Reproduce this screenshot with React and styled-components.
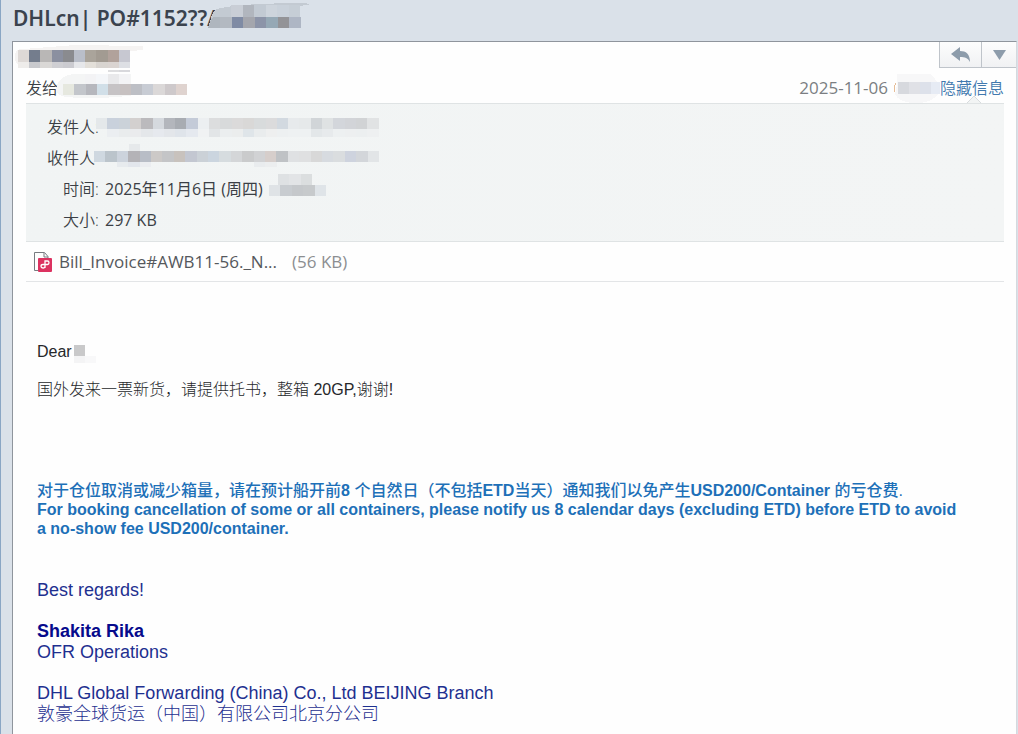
import React from "react";
import styled, { createGlobalStyle } from "styled-components";

const GlobalStyle = createGlobalStyle`
  * { box-sizing: border-box; }
  body {
    margin: 0;
    background: #dae1e9;
    color: #3b3f45;
    font-family: "Open Sans", "Noto Sans CJK SC", sans-serif;
    font-size: 16px;
  }
`;

const Page = styled.main`
  display: flex;
  flex-direction: column;
  min-height: 100vh;
  padding: 0 1px 0 11px;
  border-left: 1px solid #8aa6c4;
`;

const TitleBar = styled.header`
  display: flex;
  align-items: flex-start;
  height: 41px;
  padding-left: 1px;
`;

const Title = styled.h1`
  margin: 0;
  font-family: "Noto Sans", "Open Sans", sans-serif;
  font-size: 21px;
  line-height: 36px;
  font-weight: 600;
  color: #3b434e;
  white-space: nowrap;
`;

const Panel = styled.article`
  flex: 1;
  background: #fefefe;
  border: 1px solid #8f959d;
  border-right-color: #d5d9de;
  border-bottom: 0;
`;

const SenderRow = styled.div`
  display: flex;
  justify-content: space-between;
  height: 32px;
`;

const Actions = styled.div`
  display: flex;
  height: 26px;
  border: 1px solid #bfc4ca;
  border-width: 0 0 1px 1px;
`;

const ActionButton = styled.button`
  display: flex;
  align-items: center;
  justify-content: center;
  width: ${(p) => p.$width}px;
  padding: 0;
  border: 0;
  border-left: ${(p) => (p.$divided ? "1px solid #bfc4ca" : "0")};
  background: linear-gradient(#fdfdfd, #f0f1f3);
  color: #8d9cab;
`;

const RecipientRow = styled.div`
  display: flex;
  justify-content: space-between;
  height: 29px;
  padding: 0 12px 0 13px;
  line-height: 28px;
  font-weight: 350;
  white-space: nowrap;
`;

const Group = styled.div`
  display: flex;
`;

const DateText = styled.time`
  color: #7b7e82;
  font-size: 17px;
  font-weight: 400;
`;

const ToggleLink = styled.a`
  position: relative;
  color: #4179ae;
  text-decoration: none;
`;

const Notch = styled.svg`
  position: absolute;
  left: 27px;
  bottom: 0;
`;

const Details = styled.dl`
  margin: 0 12px 0 13px;
  padding: 8px 21px 5px;
  border-top: 1px solid #dfe3e4;
  border-bottom: 1px solid #dfe3e4;
  background: linear-gradient(100deg, #f1f4f4, #f3f5f5);
  font-weight: 350;
`;

const DetailRow = styled.div`
  display: flex;
  gap: ${(p) => (p.$indent ? 2 : 0)}px;
  height: 31px;
  padding-left: ${(p) => (p.$indent ? 16 : 0)}px;
  line-height: 30px;
  white-space: nowrap;
`;

const Term = styled.dt`
  white-space: pre;
`;

const Value = styled.dd`
  display: flex;
  margin: 0;
  font-weight: 400;
`;

const Attachment = styled.div`
  display: flex;
  align-items: center;
  height: 40px;
  margin: 0 12px 0 13px;
  padding-left: 8px;
  border-bottom: 1px solid #e3e5e7;
  font-size: 17px;
`;

const FileLink = styled.a`
  display: flex;
  align-items: center;
  gap: 7px;
  color: #55585c;
  text-decoration: none;
`;

const FileSize = styled.span`
  margin-left: 15px;
  color: #8c8e91;
`;

const Message = styled.section`
  padding: 59px 24px 0;
  font-family: "Liberation Sans", "Noto Sans CJK SC", sans-serif;
`;

const Line = styled.p`
  display: flex;
  margin: 0 0 16px;
  line-height: 22px;
  color: #26282b;
  font-weight: 300;
`;

const Notice = styled.p`
  margin: 80px 32px 0 0;
  color: #1d70b8;
  font-weight: 700;
  line-height: 19px;
`;

const Chinese = styled.span`
  font-weight: ${(p) => p.$weight};
`;

const Signature = styled.div`
  margin-top: 42px;
  color: #1e3090;
  font-size: 18px;
  line-height: 21px;
`;

const SignatureBlock = styled.p`
  margin: 0 0 20px;
`;

const Name = styled.strong`
  color: #060a8c;
`;

const Company = styled.span`
  font-weight: 300;
`;

const MosaicArt = styled.svg`
  flex: none;
  margin-left: ${(p) => p.$left || 0}px;
  margin-top: ${(p) => p.$top || 0}px;
`;

/* Pixelated patch that hides a private name: each row is [y, height, startX, cell colours]. */
function Mosaic({ width, height, cell, rows, left, top, children }) {
  return (
    <MosaicArt width={width} height={height} $left={left} $top={top} shapeRendering="crispEdges" aria-hidden="true">
      {children}
      {rows.map(([y, h, start, colors], r) =>
        colors.split(" ").map((color, i) =>
          color === "-" ? null : (
            <rect key={`${r}-${i}`} x={start + i * cell} y={y} width={cell} height={h} fill={`#${color}`} />
          )
        )
      )}
    </MosaicArt>
  );
}

export default function App() {
  return (
    <>
      <GlobalStyle />
      <Page>
        <TitleBar>
          <Title>DHLcn| PO#1152??/</Title>
          <Mosaic
            width={106} height={28} cell={11.5} left={-7}
            rows={[
              [5, 12, 23, "c9ced6 b1b6be c2cad3 cdd4dc c9d1da c6ced6"],
              [17, 11, 12, "b3b9c1 7f8ba4 a4a6ad 8c94a8 95a8b5 939397 aeb6c4"],
            ]}
          >
            <path d="M0 28C3 20 3 12 9 9 20 6 35 5 50 4L82 3Q98 3 104 4L92 6V28Z" fill="#c3cad2" />
            <path d="M0 28C3 20 3 17 6 17H12V28Z" fill="#afb6be" />
          </Mosaic>
        </TitleBar>
        <Panel>
          <SenderRow>
            <Mosaic
              width={131} height={32} cell={11.2} left={2}
              rows={[
                [8, 12, 3, "ded9d6 747d8d b9b7b6 8b90a0 8a8b8f b9bec9 aaa49b a29b92 b1a29b c7c8d1"],
                [20, 6, 3, "eeecea c8c9cd dad8d6 cfcfd3 cbcbd0 e6e7ea e3dfd9 d8d4d0 dad4d1 dddfe4"],
                [28, 2, 93, "dddddf d8d8dc"],
              ]}
            >
              <path d="M0 14Q0 7 8 7L60 3 128 4V8L115 9V26H8Q0 24 0 14Z" fill="#f5f3f2" />
            </Mosaic>
            <Actions>
              <ActionButton type="button" aria-label="Reply" $width={41}>
                <svg width="20" height="16" viewBox="0 0 20 16" aria-hidden="true">
                  <path d="M9 0V4C15 4 19 7 19 15 17 11 14 10 9 10V14L0 7Z" fill="currentColor" />
                </svg>
              </ActionButton>
              <ActionButton type="button" aria-label="More actions" $width={35} $divided>
                <svg width="13" height="10" viewBox="0 0 13 10" aria-hidden="true">
                  <path d="M0 0H13L6.5 10Z" fill="currentColor" />
                </svg>
              </ActionButton>
            </Actions>
          </SenderRow>
          <RecipientRow>
            <Group>
              <span>发给</span>
              <Mosaic
                width={131} height={26} cell={11.3} left={-2}
                rows={[
                  [0, 10, 29, "f3f3f5 f4f6f9 e9e9eb f3f3f5"],
                  [10, 11, 7, "e6e8df c3c6cb b6b7bd d1dfe8 c6c3c5 c7c1c1 bdbfc5 c8ccd4 dbd8d8 cec9cb dfd3cf"],
                ]}
              >
                <path d="M0 14Q4 0 20 0H75V10H131V21H80Q40 26 10 23 0 22 0 14Z" fill="#f4f5f5" />
              </Mosaic>
            </Group>
            <Group>
              <DateText dateTime="2025-11-06">2025-11-06</DateText>
              <Mosaic
                width={47} height={29} cell={11} left={5}
                rows={[[8, 12, 5, "d7d9de e0e1e6 dde1ea e6ebf4"]]}
              >
                <path d="M3 9Q-1 14 3 20" fill="none" stroke="#e6bd98" />
                <path d="M4 0H38Q47 8 45 20 38 30 20 29 5 28 2 20 5 10 4 0Z" fill="#f7f7f8" />
              </Mosaic>
              <ToggleLink href="#details">
                隐藏信息
                <Notch width="14" height="7" aria-hidden="true">
                  <path d="M0 7 7 0 14 7Z" fill="#f2f4f4" />
                  <path d="M0 7 7 0 14 7" fill="none" stroke="#d8dcde" />
                </Notch>
              </ToggleLink>
            </Group>
          </RecipientRow>
          <Details id="details">
            <DetailRow>
              <Term>发件人:</Term>
              <Value>
                <Mosaic
                  width={284} height={30} cell={11.3} left={-3}
                  rows={[
                    [6, 11, 0, "e4e8ea c9d1dc cbd2d9 d3d0cf bbbabd d5d9de b3b6bc a8acb2 c4cbd8 eceff1 dcddde d8dadb dbdada d9d8d7 d8dbdc dbdbdc d2d9e0 e7eaec e6e9ea d1d5d8 dfe2e3 d3d6db d2d4d8 d1d3d5 e1e3e4"],
                    [17, 8, 0, "- ebeef1 e9eced eaebed e4e7ea e6e9ee e3e6ea dfe4ea e5e9ef f0f2f3 e2e5e7 ebeeef ebeded dfe5e9 e9eced eeefef edf0f1 eef1f2 eef1f2 e3e7e9 e7eaec edf0f1 edeff0 eceff0 eef0f1"],
                  ]}
                />
              </Value>
            </DetailRow>
            <DetailRow>
              <Term>收件人</Term>
              <Value>
                <Mosaic
                  width={285} height={30} cell={11.4} left={-1} top={1}
                  rows={[
                    [0, 7, 35, "e6e9eb"],
                    [7, 11, 0, "cfd8e0 bbc4cb ccd3dc b4b3b7 b8bdc6 ccc9c7 c4c5c7 c8c2bd c3c7d1 cbd1d7 cbd5df d6dcdf d4d6d8 cacbcc d1d2d4 d6cecb bfc2c5 dfe1e3 dfe0e1 d8d8d8 d7dbe0 dadddf ced3de d3d6da e2e5e7"],
                    [18, 5, 23, "e7ebee e2e6ec ebedf0"],
                    [18, 5, 160, "e9ecee eceeef"],
                  ]}
                />
              </Value>
            </DetailRow>
            <DetailRow $indent>
              <Term>时间: </Term>
              <Value>
                2025年11月6日 (周四)
                <Mosaic
                  width={58} height={30} cell={11.4} left={6}
                  rows={[
                    [0, 11, 9, "dee1e3 e2e4e6 dbdedf"],
                    [11, 11, 0, "dfe3e6 c8ccd0 c5c8cb c7cacc dfe4e8"],
                  ]}
                />
              </Value>
            </DetailRow>
            <DetailRow $indent>
              <Term>大小: </Term>
              <Value>297 KB</Value>
            </DetailRow>
          </Details>
          <Attachment>
            <FileLink href="#attachment">
              <svg width="18" height="20" viewBox="0 0 18 20" aria-hidden="true">
                <path d="M14 6V4.5L10.5.5H.5V18.5H4" fill="none" stroke="#777b80" />
                <path d="M10 1V5H14" fill="none" stroke="#777b80" />
                <rect x="4" y="6" width="14" height="14" rx="1" fill="#dc3260" />
                <path d="M11 16V9H13.5Q15 9 15 10.7T13.5 12.5H9Q7 12.5 7 14.2T9 16 11 14.2" fill="none" stroke="#fff" strokeWidth="1.3" />
              </svg>
              <span>Bill_Invoice#AWB11-56._N...</span>
            </FileLink>
            <FileSize>(56 KB)</FileSize>
          </Attachment>
          <Message>
            <Line>
              Dear
              <Mosaic width={22} height={22} cell={11} left={2} rows={[[4, 11, 0, "c9c9ca"], [15, 7, 0, "f4f4f5 f8f8f9"]]} />
            </Line>
            <Line>国外发来一票新货，请提供托书，整箱 20GP,谢谢!</Line>
            <Notice>
              <Chinese $weight={500}>对于仓位取消或减少箱量，请在预计船开前</Chinese>8{" "}
              <Chinese $weight={500}>个自然日（不包括</Chinese>ETD
              <Chinese $weight={500}>当天）通知我们以免产生</Chinese>USD200/Container{" "}
              <Chinese $weight={500}>的亏仓费.</Chinese>
              <br />
              For booking cancellation of some or all containers, please notify us 8 calendar days (excluding ETD)
              before ETD to avoid a no-show fee USD200/container.
            </Notice>
            <Signature>
              <SignatureBlock>Best regards!</SignatureBlock>
              <SignatureBlock>
                <Name>Shakita Rika</Name>
                <br />
                OFR Operations
              </SignatureBlock>
              <SignatureBlock>
                DHL Global Forwarding (China) Co., Ltd BEIJING Branch
                <br />
                <Company>敦豪全球货运（中国）有限公司北京分公司</Company>
              </SignatureBlock>
            </Signature>
          </Message>
        </Panel>
      </Page>
    </>
  );
}
